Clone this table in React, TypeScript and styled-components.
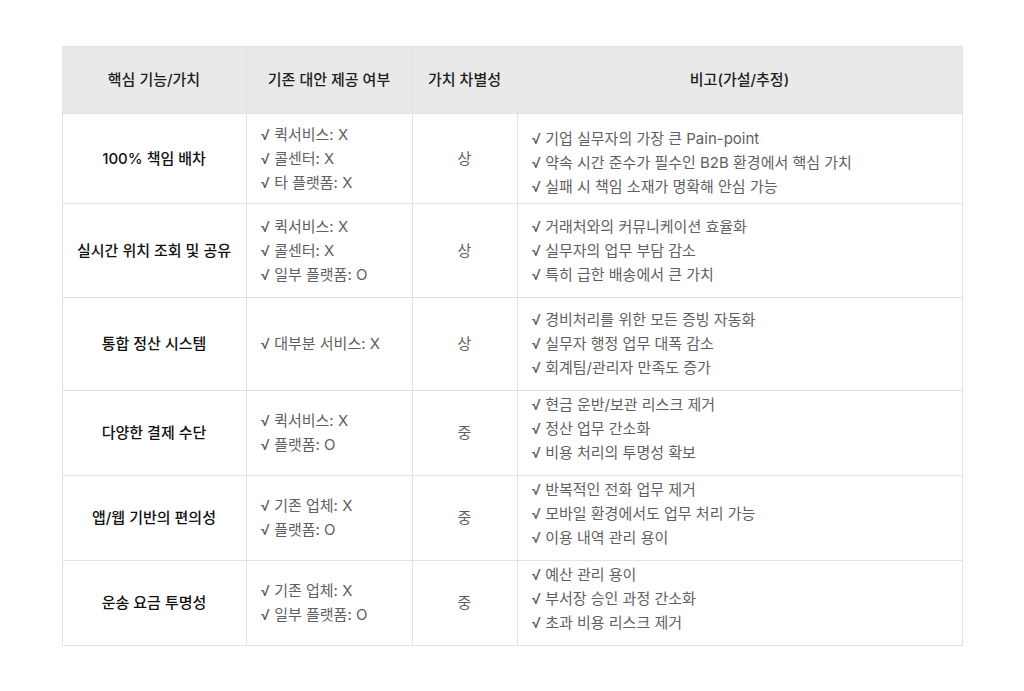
import styled, { createGlobalStyle } from 'styled-components';

type Row = {
  feature: string;
  existing: string[];
  level: string;
  notes: string[];
  height: number;
  shift: number;
};

const rows: Row[] = [
  {
    feature: '100% 책임 배차',
    existing: ['퀵서비스: X', '콜센터: X', '타 플랫폼: X'],
    level: '상',
    notes: ['기업 실무자의 가장 큰 Pain-point', '약속 시간 준수가 필수인 B2B 환경에서 핵심 가치', '실패 시 책임 소재가 명확해 안심 가능'],
    height: 90,
    shift: 4,
  },
  {
    feature: '실시간 위치 조회 및 공유',
    existing: ['퀵서비스: X', '콜센터: X', '일부 플랫폼: O'],
    level: '상',
    notes: ['거래처와의 커뮤니케이션 효율화', '실무자의 업무 부담 감소', '특히 급한 배송에서 큰 가치'],
    height: 94,
    shift: 0,
  },
  {
    feature: '통합 정산 시스템',
    existing: ['대부분 서비스: X'],
    level: '상',
    notes: ['경비처리를 위한 모든 증빙 자동화', '실무자 행정 업무 대폭 감소', '회계팀/관리자 만족도 증가'],
    height: 93,
    shift: 0,
  },
  {
    feature: '다양한 결제 수단',
    existing: ['퀵서비스: X', '플랫폼: O'],
    level: '중',
    notes: ['현금 운반/보관 리스크 제거', '정산 업무 간소화', '비용 처리의 투명성 확보'],
    height: 85,
    shift: -4,
  },
  {
    feature: '앱/웹 기반의 편의성',
    existing: ['기존 업체: X', '플랫폼: O'],
    level: '중',
    notes: ['반복적인 전화 업무 제거', '모바일 환경에서도 업무 처리 가능', '이용 내역 관리 용이'],
    height: 85,
    shift: -4,
  },
  {
    feature: '운송 요금 투명성',
    existing: ['기존 업체: X', '일부 플랫폼: O'],
    level: '중',
    notes: ['예산 관리 용이', '부서장 승인 과정 간소화', '초과 비용 리스크 제거'],
    height: 85,
    shift: -4,
  },
];

const GlobalStyle = createGlobalStyle`
  body {
    margin: 0;
    background: #ffffff;
    font-family: Inter, "Noto Sans CJK KR", "Noto Sans", sans-serif;
  }
`;

const Page = styled.div`
  padding-top: 46px;
  display: flex;
  justify-content: center;
`;

const Table = styled.table`
  width: 900px;
  table-layout: fixed;
  border-collapse: collapse;
  font-size: 15px;
  line-height: 24px;
`;

const HeadCell = styled.th`
  height: 66px;
  padding: 0 12px;
  background: #e9e9e9;
  border: 1px solid #e2e2e2;
  color: #1e1e1e;
  font-weight: 500;
  text-align: center;
  vertical-align: middle;
`;

const BodyRow = styled.tr<{ $height: number }>`
  height: ${(p) => p.$height}px;
`;

const Cell = styled.td<{ $align?: 'left' | 'center'; $shift?: number }>`
  padding: ${(p) => 4 + (p.$shift ?? 0)}px 14px ${(p) => 4 - (p.$shift ?? 0)}px;
  border: 1px solid #e2e2e2;
  color: #5f5f5f;
  text-align: ${(p) => p.$align ?? 'left'};
  vertical-align: middle;
`;

const FeatureCell = styled(Cell)`
  color: #111111;
  font-weight: 500;
`;

const Check = styled.div`
  white-space: nowrap;
`;

const cols = [184, 166, 105, 445];

const App = () => {
  return (
    <>
      <GlobalStyle />
      <Page>
        <Table>
          <colgroup>
            {cols.map((w, i) => (
              <col key={i} style={{ width: w }} />
            ))}
          </colgroup>
          <thead>
            <tr>
              <HeadCell>핵심 기능/가치</HeadCell>
              <HeadCell>기존 대안 제공 여부</HeadCell>
              <HeadCell>가치 차별성</HeadCell>
              <HeadCell>비고(가설/추정)</HeadCell>
            </tr>
          </thead>
          <tbody>
            {rows.map((r) => (
              <BodyRow key={r.feature} $height={r.height}>
                <FeatureCell $align="center">{r.feature}</FeatureCell>
                <Cell>
                  {r.existing.map((e) => (
                    <Check key={e}>√ {e}</Check>
                  ))}
                </Cell>
                <Cell $align="center">{r.level}</Cell>
                <Cell $shift={r.shift}>
                  {r.notes.map((n) => (
                    <Check key={n}>√ {n}</Check>
                  ))}
                </Cell>
              </BodyRow>
            ))}
          </tbody>
        </Table>
      </Page>
    </>
  );
};

export default App;
